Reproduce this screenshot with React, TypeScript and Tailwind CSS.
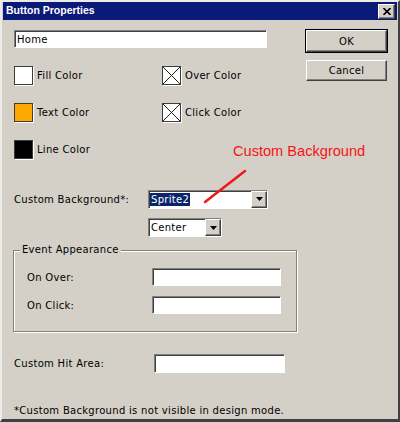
import React from 'react';

const ui = "font-['DejaVu_Sans',sans-serif] text-[10px] tracking-[0.3px] text-black";
const raised =
  'border border-t-white border-l-white border-r-[#404040] border-b-[#404040] shadow-[inset_-1px_-1px_0_#808080] bg-[#d4d0c8]';
const sunken =
  'border border-t-[#808080] border-l-[#808080] border-r-white border-b-white shadow-[inset_1px_1px_0_#404040] bg-white';

function DropArrow() {
  return (
    <div className={`${raised} w-[16px] h-full flex items-center justify-center`}>
      <svg width="7" height="4" viewBox="0 0 7 4">
        <path d="M0 0H7L3.5 4Z" fill="#000" />
      </svg>
    </div>
  );
}

function Swatch({ color, crossed }: { color?: string; crossed?: boolean }) {
  return (
    <div
      className="w-[19px] h-[19px] border border-[#3c3c3c] shadow-[1px_1px_0_#ffffff] flex"
      style={{ background: color ?? '#fff' }}
    >
      {crossed && (
        <svg width="17" height="17" viewBox="0 0 17 17">
          <path d="M0 0L17 17M17 0L0 17" stroke="#222" strokeWidth="1" />
        </svg>
      )}
    </div>
  );
}

const swatches = [
  { label: 'Fill Color', color: '#ffffff' },
  { label: 'Over Color', crossed: true },
  { label: 'Text Color', color: '#fcaa00' },
  { label: 'Click Color', crossed: true },
  { label: 'Line Color', color: '#000000' },
];

export default function App() {
  return (
    <div
      className={`${ui} relative w-[400px] h-[422px] bg-[#d4d0c8] border-l-2 border-t-2 border-l-[#ecebe6] border-t-[#ecebe6] border-r-2 border-r-[#404040] border-b-[3px] border-b-[#404040] flex flex-col`}
    >
      {/* title bar */}
      <div className="h-[18px] ml-[1px] mr-[1px] bg-[#0a1a78] flex items-center justify-between pl-[3px] pr-[2px]">
        <span className="font-['Liberation_Sans',sans-serif] font-bold text-[10.5px] tracking-normal text-white">
          Button Properties
        </span>
        <button className={`${raised} w-[17px] h-[15px] flex items-center justify-center`}>
          <svg width="8" height="7" viewBox="0 0 8 7">
            <path d="M0.5 0L7.5 7M7.5 0L0.5 7" stroke="#000" strokeWidth="1.6" />
          </svg>
        </button>
      </div>

      <div className="flex pl-[12px] pr-[11px] pt-[10px]">
        <div className="flex-1 flex flex-col">
          <div className={`${sunken} w-[253px] h-[18px] flex items-center pl-[2px]`}>Home</div>

          <div className="mt-[18px] grid grid-cols-[148px_auto] gap-y-[18px]">
            {swatches.map((s) => (
              <div key={s.label} className="flex items-center gap-[4px] h-[19px]">
                <Swatch color={s.color} crossed={s.crossed} />
                <span>{s.label}</span>
              </div>
            ))}
          </div>

          <div className="mt-[31px] flex items-center h-[18px]">
            <span className="w-[134px]">Custom Background*:</span>
            <div className={`${sunken} w-[120px] h-[19px] flex items-center justify-between pl-[1px]`}>
              <span className="bg-[#0a246a] text-white px-[1px] leading-[13px]">Sprite2</span>
              <DropArrow />
            </div>
          </div>

          <div className={`${sunken} mt-[10px] ml-[134px] w-[74px] h-[19px] flex items-center justify-between pl-[2px]`}>
            <span>Center</span>
            <DropArrow />
          </div>

          <div className="relative mt-[13px] -ml-[1px] w-[284px] h-[82px] border border-[#808080] shadow-[1px_1px_0_#ffffff,inset_1px_1px_0_#ffffff] pl-[13px] pt-[17px] flex flex-col gap-[10px]">
            <span className="absolute -top-[7px] left-[6px] px-[2px] bg-[#d4d0c8] leading-[12px]">
              Event Appearance
            </span>
            <div className="flex items-center">
              <span className="w-[125px]">On Over:</span>
              <div className={`${sunken} w-[129px] h-[18px]`} />
            </div>
            <div className="flex items-center">
              <span className="w-[125px]">On Click:</span>
              <div className={`${sunken} w-[129px] h-[18px]`} />
            </div>
          </div>

          <div className="mt-[22px] flex items-center">
            <span className="w-[140px]">Custom Hit Area:</span>
            <div className={`${sunken} w-[131px] h-[19px]`} />
          </div>

          <p className="mt-[32px] leading-[12px]">*Custom Background is not visible in design mode.</p>
        </div>

        <div className="w-[81px] flex flex-col gap-[8px]">
          <button className={`${raised} h-[22px] outline outline-1 outline-black`}>OK</button>
          <button className={`${raised} h-[21px]`}>Cancel</button>
        </div>
      </div>

      {/* annotation overlay */}
      <span className="absolute left-[231px] top-[141px] font-['Liberation_Sans',sans-serif] text-[14.6px] tracking-normal leading-[17px] text-[#f41414]">
        Custom Background
      </span>
      <svg className="absolute left-[198px] top-[166px]" width="50" height="38" viewBox="0 0 50 38">
        <path d="M45 3L5 34" stroke="#f01818" strokeWidth="2.5" strokeLinecap="round" />
      </svg>
    </div>
  );
}
